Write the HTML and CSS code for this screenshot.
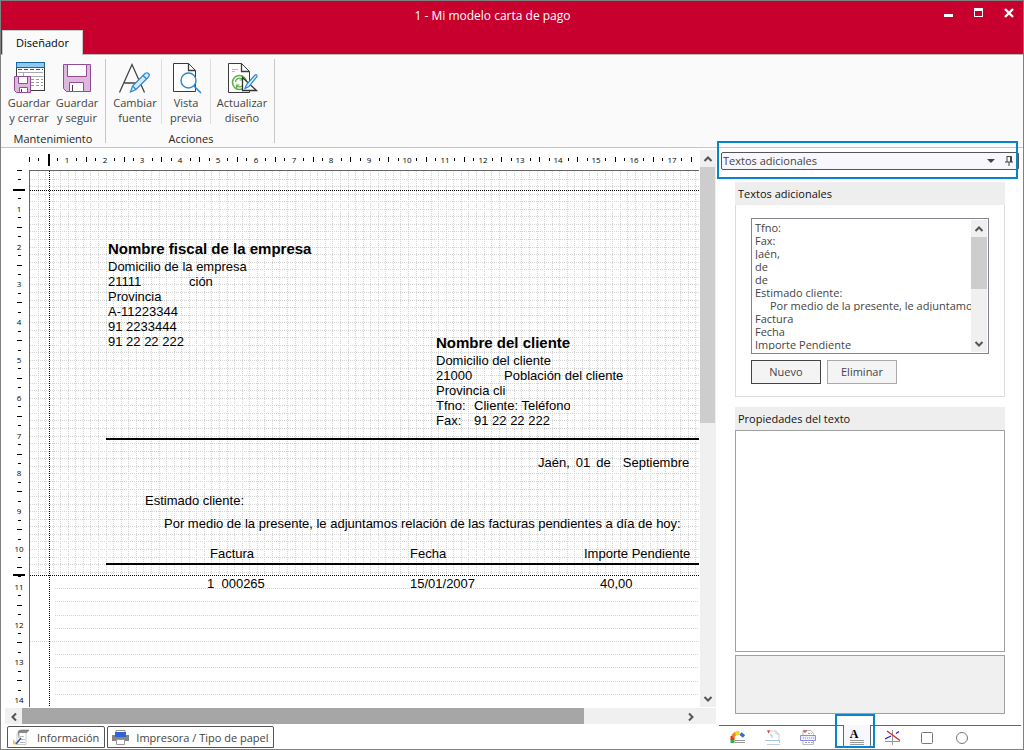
FILE: index.html
```html
<!DOCTYPE html>
<html lang="es">
<head>
<meta charset="utf-8">
<title>1 - Mi modelo carta de pago</title>
<link rel="stylesheet" href="styles.css">
</head>
<body>
<div class="window">
  <header class="titlebar">
    <h1 class="title">1 - Mi modelo carta de pago</h1>
    <div class="controls">
      <button class="control" aria-label="Minimizar"><svg width="10" height="10" viewBox="0 0 10 10"><path d="M0 6h9v3H0z" fill="#fff"/></svg></button>
      <button class="control" aria-label="Maximizar"><svg width="10" height="10" viewBox="0 0 10 10"><path d="M0 0h9v9H0zM1 3v5h7V3z" fill="#fff" fill-rule="evenodd"/></svg></button>
      <button class="control" aria-label="Cerrar"><svg width="10" height="10" viewBox="0 0 10 10"><path d="M1 1l8 8M9 1l-8 8" stroke="#fff" stroke-width="2.4"/></svg></button>
    </div>
    <button class="ribbon-tab">Diseñador</button>
  </header>

  <div class="ribbon">
    <section class="group">
      <div class="group-buttons">
        <button class="tool">
          <svg width="34" height="34" viewBox="0 0 34 34"><rect x="4.500" y="1.500" width="28" height="28" fill="#fff" stroke="#3b3b3b"/><rect x="4.500" y="1.500" width="28" height="5" fill="#91c8f0" stroke="#1467ab"/><path d="M6 8.500h25" stroke="#555" stroke-dasharray="4 2"/><path d="M6 11.500h25M11.500 11v4.500h20" stroke="#aaa" fill="none"/><path d="M19 18.500h12M19 21.500h12M19 24.500h12" stroke="#999" stroke-dasharray="3 2"/><path d="M2.500 15.500h16v16h-14l-2-2z" fill="#dcb8dc" stroke="#954a98"/><path d="M6.500 15.500h9v7h-9zM7.500 26.500h8v5h-8z" fill="#fff" stroke="#954a98"/><path d="M9.500 28v3" stroke="#444"/></svg>
          <span>Guardar<br>y cerrar</span>
        </button>
        <button class="tool">
          <svg width="34" height="34" viewBox="0 0 34 34"><path d="M3.500 3.500h27V30.500h-24l-3-3z" fill="#dcb8dc" stroke="#954a98"/><path d="M7.500 3.500h19v12h-19zM9.500 21.500h14v9h-14z" fill="#fff" stroke="#954a98"/><path d="M12.500 24v6" stroke="#444"/></svg>
          <span>Guardar<br>y seguir</span>
        </button>
      </div>
      <h2 class="group-name">Mantenimiento</h2>
    </section>
    <section class="group">
      <div class="group-buttons">
        <button class="tool tool-font">
          <svg width="34" height="34" viewBox="0 0 34 34"><path d="M1.500 31.500L14 3.500l12.500 28M6.500 22h14" fill="none" stroke="#444" stroke-width="1.300"/><path d="M12.500 31l2-6L27 12.500q2-1.500 3.500 0t0 3.500L18 28.500zM14.500 25l3.500 3.500M25 14.500l3.500 3.500" fill="#d5eaf8" stroke="#2b88cc" stroke-width="1.200"/></svg>
          <span>Cambiar<br>fuente</span>
        </button>
        <button class="tool tool-preview">
          <svg width="34" height="34" viewBox="0 0 34 34"><path d="M4.500 2.500h15l7 7v21h-22z" fill="#fff" stroke="#3b3b3b"/><path d="M19.500 2.500v7h7" fill="none" stroke="#3b3b3b" stroke-width="1.300"/><circle cx="19.500" cy="19.500" r="7.500" fill="#fff" stroke="#2b88cc" stroke-width="1.400"/><path d="M25 25l7 7" stroke="#2b88cc" stroke-width="1.500"/></svg>
          <span>Vista<br>previa</span>
        </button>
        <button class="tool tool-refresh">
          <svg width="34" height="34" viewBox="0 0 34 34"><path d="M3.500 2.500h13l8 8v21h-21z" fill="#fff" stroke="#3b3b3b"/><path d="M16.500 2.500v8h8" fill="none" stroke="#3b3b3b" stroke-width="1.300"/><path d="M7 8.500h6M7 10.500h3" stroke="#bbb"/><circle cx="14.500" cy="21.500" r="7" fill="#fff" stroke="#5cb045" stroke-width="1.600"/><path d="M10.500 21a4 4 0 0 1 7-2.500M18.500 22a4 4 0 0 1-7 2.500M17.500 16v3h-3M11.500 27v-3h3" fill="none" stroke="#5cb045" stroke-width="1.200"/><path d="M17.500 16.500v13h14z" fill="#fff" stroke="#333" stroke-width="1.300"/><path d="M20 27.500l1.500-4L30 14q2-1 2 1.500L24 25.500z" fill="#d5eaf8" stroke="#2b88cc" stroke-width="1.200"/></svg>
          <span>Actualizar<br>diseño</span>
        </button>
      </div>
      <h2 class="group-name">Acciones</h2>
    </section>
  </div>

  <main class="workspace">
    <div class="designer">
      <div class="editor">
        <svg class="ruler ruler-top" aria-hidden="true"></svg>
        <svg class="ruler ruler-left" aria-hidden="true"></svg>
        <div class="page">
          <svg class="page-grid" aria-hidden="true"></svg>
          <div class="block company">
            <strong class="name">Nombre fiscal de la empresa</strong>
            <span>Domicilio de la empresa</span>
            <span class="pair"><span>21111</span><span>ción</span></span>
            <span>Provincia</span>
            <span>A-11223344</span>
            <span>91 2233444</span>
            <span>91 22 22 222</span>
          </div>
          <div class="block client">
            <strong class="name">Nombre del cliente</strong>
            <span>Domicilio del cliente</span>
            <span class="pair pair-city"><span>21000</span><span>Población del cliente</span></span>
            <span>Provincia cli</span>
            <span class="pair pair-phone"><span>Tfno:</span><span class="clipped">Cliente: Teléfono</span></span>
            <span class="pair pair-phone"><span>Fax:</span><span>91 22 22 222</span></span>
          </div>
          <div class="block rule"></div>
          <div class="block date"><span>Jaén,</span><span>01</span><span>de</span><span class="month">Septiembre</span></div>
          <div class="block greeting">Estimado cliente:</div>
          <div class="block intro">Por medio de la presente, le adjuntamos relación de las facturas pendientes a día de hoy:</div>
          <div class="block columns"><span>Factura</span><span>Fecha</span><span>Importe Pendiente</span></div>
          <div class="block detail"><span>1&nbsp; 000265</span><span>15/01/2007</span><span>40,00</span></div>
        </div>
        <div class="scroll scroll-v">
          <button class="arrow" aria-label="Subir"><svg width="10" height="10" viewBox="0 0 10 10"><path d="M1.500 7L5 3.500 8.500 7"/></svg></button>
          <div class="thumb"></div>
          <button class="arrow arrow-end" aria-label="Bajar"><svg width="10" height="10" viewBox="0 0 10 10"><path d="M1.500 3L5 6.500 8.500 3"/></svg></button>
        </div>
        <div class="scroll scroll-h">
          <button class="arrow" aria-label="Izquierda"><svg width="10" height="10" viewBox="0 0 10 10"><path d="M7 1.500L3.500 5 7 8.500"/></svg></button>
          <div class="thumb"></div>
          <button class="arrow arrow-end" aria-label="Derecha"><svg width="10" height="10" viewBox="0 0 10 10"><path d="M3 1.500L6.500 5 3 8.500"/></svg></button>
        </div>
      </div>
      <div class="sheet-tabs">
        <button class="sheet-tab"><svg width="17" height="17" viewBox="0 0 17 17"><path d="M5 3.500h8v12H4v-11z" fill="#fff" stroke="#ccc"/><path d="M5 4Q5 1 8 1h8l-2 2.500H6V9" fill="#888" stroke="#777" stroke-width=".6"/><path d="M7 7.500h4M7 10.500h5M7 13.500h5" stroke="#bbb"/><path d="M0 10l5 5.500H0z" fill="#f3c86a"/><path d="M3 15l5-6" stroke="#2b5b95" stroke-width="1.500"/></svg>Información</button>
        <button class="sheet-tab sheet-printer"><svg width="17" height="17" viewBox="0 0 17 17"><path d="M4 1.500h9v4H4z" fill="#fff" stroke="#999"/><path d="M0 6h17v6H0z" fill="#858585"/><path d="M3 3h11v5H3z" fill="#3163d4"/><path d="M4.500 10.500h8v5h-8z" fill="#fff" stroke="#999"/></svg>Impresora / Tipo de papel</button>
      </div>
    </div>

    <aside class="panel">
      <div class="panel-head">
        <select class="panel-select" aria-label="Panel"><option>Textos adicionales</option></select>
        <svg class="caret" width="8" height="4" viewBox="0 0 8 4"><path d="M0 0h8L4 4z" fill="#444"/></svg>
        <button class="pin" aria-label="Fijar"><svg width="8" height="10" viewBox="0 0 8 10"><path d="M2 .5h4.500V6M2 0v6M5.500 0v6M0 6h8M4 6v4" fill="none" stroke="#444"/></svg></button>
        <div class="highlight highlight-head"></div>
      </div>
      <div class="panel-body">
        <section class="box">
          <h2 class="box-title"><label for="texts">Textos adicionales</label></h2>
          <div class="box-content">
            <div class="list">
              <select id="texts" class="list-items" size="10">
                <option>Tfno:</option><option>Fax:</option><option>Jaén,</option><option>de</option><option>de</option><option>Estimado cliente:</option><option class="indent">Por medio de la presente, le adjuntamos relación</option><option>Factura</option><option>Fecha</option><option>Importe Pendiente</option>
              </select>
              <div class="scroll list-scroll">
                <button class="arrow" aria-label="Subir"><svg width="10" height="10" viewBox="0 0 10 10"><path d="M1.500 7L5 3.500 8.500 7"/></svg></button>
                <div class="thumb"></div>
                <button class="arrow arrow-end" aria-label="Bajar"><svg width="10" height="10" viewBox="0 0 10 10"><path d="M1.500 3L5 6.500 8.500 3"/></svg></button>
              </div>
            </div>
            <div class="actions"><button class="action action-main">Nuevo</button><button class="action">Eliminar</button></div>
          </div>
        </section>
        <section class="properties">
          <h2 class="box-title">Propiedades del texto</h2>
          <div class="prop-grid"></div>
          <div class="prop-help"></div>
        </section>
      </div>
      <nav class="panel-tabs">
        <button class="ptab" aria-label="Campos"><svg width="16" height="15" viewBox="0 0 16 15"><path d="M2.500 13V9.500" stroke="#3bab3b" stroke-width="4"/><path d="M2.500 10V6" stroke="#e03b24" stroke-width="4"/><path d="M2.500 6.500L6 3" stroke="#e88a26" stroke-width="3.500"/><circle cx="7.500" cy="3" r="2.300" fill="#f3d52b"/><path d="M10.500 3.500l3.500 3" stroke="#2d74c4" stroke-width="3.500"/><path d="M5 10.500h10M5 12.500h10" stroke="#999"/></svg></button>
        <button class="ptab" aria-label="Encabezado"><svg width="16" height="15" viewBox="0 0 16 15"><path d="M3 1h8l3 3v6M11 1v3h3M2 14.500h13" fill="none" stroke="#ccc"/><path d="M2 1h3M3.500 1v2" stroke="#d33"/><path d="M5 5h2v3" stroke="#bbb" fill="none"/><path d="M0 10.500h14.500v2.500" stroke="#9bc9ee" fill="none"/></svg></button>
        <button class="ptab" aria-label="Detalle"><svg width="16" height="15" viewBox="0 0 16 15"><path d="M3 .5h8l2.500 3V14.500H3z" fill="#fff" stroke="#bbb"/><path d="M.5 5.500h15v5H.5z" fill="#eef" stroke="#8b8be8"/><path d="M3 8h11" stroke="#8b8be8" stroke-dasharray="1 1"/><path d="M3 1h4M5 1v2" stroke="#d33"/><path d="M5 12.500h8M8 3.500h4" stroke="#aaa" stroke-dasharray="2 1"/></svg></button>
        <button class="ptab ptab-active" aria-label="Textos"><span class="letter">A</span><svg width="14" height="6" viewBox="0 0 14 6"><path d="M0 .5h14M0 2.500h14M0 4.500h14" stroke="#999"/></svg><span class="highlight highlight-tab"></span></button>
        <button class="ptab" aria-label="Líneas"><svg width="16" height="15" viewBox="0 0 16 15"><path d="M0 11.500h15M7.500 0v15" stroke="#999"/><path d="M2 1l13 9.500" stroke="#e02020" stroke-width="1.300"/><path d="M0 9L6 6M11 3.500L14 1.500" stroke="#2020d0" stroke-width="1.300"/></svg></button>
        <button class="ptab" aria-label="Rectángulo"><svg width="15" height="15" viewBox="0 0 15 15"><rect x="1.500" y="2.500" width="11" height="11" rx="1" fill="#fff" stroke="#777"/></svg></button>
        <button class="ptab" aria-label="Elipse"><svg width="15" height="15" viewBox="0 0 15 15"><circle cx="7" cy="8" r="5.500" fill="#fff" stroke="#777"/></svg></button>
      </nav>
    </aside>
  </main>
</div>
<script src="designer.js"></script>
</body>
</html>
```
FILE: styles.css
```css
* { box-sizing: border-box; }
body { margin: 0; font-family: "Open Sans", sans-serif; font-size: 11px; color: #444; }
button, select { font: inherit; color: inherit; margin: 0; padding: 0; border: 0; background: none; border-radius: 0; outline: 0; }
h1, h2 { margin: 0; font-size: 11px; font-weight: 400; }
svg { display: block; flex: none; }

.window { display: flex; flex-direction: column; height: 100vh; border: 1px solid #808080; background: #fff; }

.titlebar { display: grid; grid-template: 29px 24px / 1fr auto; background: #c8002d; border-bottom: 1px solid #c0b8b8; }
.title { font-size: 12px; line-height: 29px; text-align: center; color: #fff; padding-left: 40px; }
.controls { display: flex; gap: 20px; padding: 7px 9px 0 0; align-items: flex-start; }
.control { width: 10px; height: 10px; }
.ribbon-tab { justify-self: start; grid-column: 1; width: 81px; height: 25px; margin-left: 1px; padding-bottom: 1px; background: #fafafa; border: 1px solid #c8c8c8; border-bottom: 0; color: #000; }

.ribbon { display: flex; height: 93px; background: #fafafa; border-bottom: 1px solid #c6c6c6; padding: 4px 0; }
.group { display: flex; flex-direction: column; border-right: 1px solid #c6c6c6; padding-left: 4px; }
.group + .group { padding-left: 2px; }
.group-buttons { display: flex; flex: 1; }
.group-name { text-align: center; color: #262626; line-height: 9px; }
.group:first-child .group-name { padding-right: 4px; }
.tool { display: flex; flex-direction: column; align-items: center; width: 48px; padding-top: 2px; line-height: 15px; }
.group:first-child .group-buttons { padding-right: 4px; }
.tool-font { width: 54px; }
.tool-preview { width: 48px; box-shadow: -1px 0 #dedede, 1px 0 #dedede; height: 65px; }
.tool-refresh { width: 64px; }

.workspace { flex: 1; display: flex; min-height: 0; }
.designer { flex: 1; min-width: 0; display: flex; flex-direction: column; }
.editor { flex: 1; min-height: 0; display: grid; grid-template: 22px 1fr 18px / 28px 1fr 17px; }
.ruler { grid-row: 1; grid-column: 1 / 3; width: 100%; height: 100%; font-size: 8px; fill: #000; }
.ruler-left { grid-row: 1 / 3; grid-column: 1; }
.page { grid-row: 2; grid-column: 2; position: relative; overflow: hidden; border: solid #666; border-width: 1px 0 0 1px; font: 13px/15px "Liberation Sans", sans-serif; color: #000; }
.page-grid { width: 100%; height: 100%; }

.block { position: absolute; white-space: nowrap; }
.company, .client { display: flex; flex-direction: column; }
.name { font-size: 15px; line-height: 20px; }
.company { left: 78px; top: 68px; }
.client { left: 406px; top: 162px; }
.pair { display: grid; grid-template-columns: 81px auto; }
.pair-city { grid-template-columns: 68px auto; }
.pair-phone { grid-template-columns: 38px auto; }
.clipped { width: 96px; overflow: hidden; }
.rule { left: 76px; right: 0; top: 267px; height: 2px; background: #000; }
.date { left: 508px; top: 284px; display: flex; gap: 6px; }
.month { padding-left: 6px; }
.greeting { left: 115px; top: 322px; }
.intro { left: 134px; top: 345px; }
.columns, .detail { left: 76px; right: 0; display: grid; grid-template-columns: 200px 174px 1fr; }
.columns { top: 375px; height: 19px; border-bottom: 2px solid #000; padding-left: 104px; }
.detail { top: 405px; padding-left: 101px; grid-template-columns: 203px 190px 1fr; }

.scroll { display: flex; background: #f0f0f0; }
.scroll .thumb { background: #cdcdcd; }
.arrow { display: grid; place-items: center; flex: none; width: 15px; height: 17px; }
.arrow path { fill: none; stroke: #555; stroke-width: 2; }
.scroll-v { grid-row: 1 / 3; grid-column: 3; flex-direction: column; margin: 2px 0 0 1px; }
.scroll-v .arrow, .list-scroll .arrow { margin-left: 0; }
.scroll-v .thumb { height: 46%; margin-right: 1px; }
.scroll-h { grid-row: 3; grid-column: 1 / 4; margin: 1px 0 1px 4px; }
.scroll-h .thumb { width: 79%; background: #a6a6a6; }
.scroll-h .arrow { width: 17px; }
.scroll-h .arrow-end { margin-right: 17px; }
.arrow-end { margin-top: auto; margin-left: auto; }

.sheet-tabs { display: flex; gap: 2px; height: 24px; padding: 1px 0 1px 6px; }
.sheet-tab { display: flex; align-items: center; gap: 7px; height: 22px; padding: 0 5px; border: 1px solid #555; border-radius: 2px 2px 0 0; }
.sheet-printer { padding: 0 4px; }

.panel { width: 307px; flex: none; display: flex; flex-direction: column; padding-left: 3px; }
.panel-head { position: relative; height: 18px; margin: 4px 4px 0 2px; border: 1px solid #555; border-radius: 2px; background: #f7f7fd; display: flex; align-items: center; }
.panel-select { appearance: none; flex: 1; height: 16px; padding: 0 0 1px 1px; }
.caret { margin-right: 9px; }
.pin { width: 12px; height: 10px; padding-left: 1px; margin-right: 2px; }
.highlight { position: absolute; border: 2px solid #0a84c8; pointer-events: none; }
.highlight-head { inset: -12px 0 -10px -5px; }
.panel-body { flex: 1; display: flex; flex-direction: column; gap: 10px; padding: 12px 18px 11px 16px; }
.box-title { height: 23px; line-height: 23px; padding-left: 3px; background: #eee; color: #111; }
.box { border: 1px solid #dcdcdc; border-top: 0; }
.box > .box-title { margin: 0 -1px; }
.box-content { padding: 13px 15px 12px; }
.list { display: flex; height: 136px; border: 1px solid #82858f; padding: 1px 1px 1px 0; }
.list-items { flex: 1; min-width: 0; height: 132px; overflow: hidden; padding: 0 0 0 3px; }
.list-items option { height: 13px; min-height: 13px; line-height: 11px; padding: 0; overflow: hidden; }
.list-items .indent { padding-left: 15px; }
.list-scroll { flex-direction: column; width: 16px; }
.list-scroll .thumb { height: 52px; }
.actions { display: flex; gap: 6px; margin-top: 6px; }
.action { width: 70px; height: 24px; padding-bottom: 1px; border: 1px solid #aaa; background: #f4f4f4; }
.action-main { border-color: #444; }
.properties { flex: 1; display: flex; flex-direction: column; }
.prop-grid { flex: 1; border: 1px solid #a0a0a0; }
.prop-help { height: 59px; margin-top: 3px; border: 1px solid #a0a0a0; background: #f0f0f0; }

.panel-tabs { display: flex; height: 24px; border-top: 1px solid #666; margin: 0 2px 0 0; padding-left: 1px; }
.ptab { width: 35px; display: flex; flex-direction: column; align-items: center; padding-top: 4px; }
.ptab-active { position: relative; width: 28px; height: 22px; margin: -1px 4px 0 18px; padding-top: 4px; background: #f7f7fd; border: 1px solid #666; border-top: 0; border-radius: 0 0 2px 2px; }
.letter { font: bold 12px/11px "Liberation Serif", serif; color: #000; padding-right: 6px; height: 12px; }
.highlight-tab { inset: -11px -5px -2px -9px; }
```
FILE: designer.js
```js
// Rulers and grid of the page designer, in pixels per centimetre.
const CM = 37.8;
const SECTION_END = 404;
const GRID = "#d4d4d4";

function rect(x, y, w, h) {
  return `<rect x="${x}" y="${y}" width="${w}" height="${h}"/>`;
}

function line(x1, y1, x2, y2, color) {
  return `<line x1="${x1}" y1="${y1}" x2="${x2}" y2="${y2}" stroke="${color}" stroke-dasharray="1 1"/>`;
}

// Calls mark(position, kind, number) for every quarter that fits in length.
function eachQuarter(start, length, mark) {
  for (let k = 0; ; k++) {
    const p = Math.round(start + k * CM / 4);
    if (p > length - 6) return;
    if (k === 2) mark(p, "origin");
    else if (k && k % 4 === 0) mark(p, "number", k / 4);
    else mark(p, k % 2 ? "short" : "long");
  }
}

function draw() {
  const topRuler = document.querySelector(".ruler-top");
  const leftRuler = document.querySelector(".ruler-left");
  const page = document.querySelector(".page-grid");
  const width = page.clientWidth;
  const height = page.clientHeight;

  let out = "";
  eachQuarter(28, topRuler.clientWidth, (x, kind, n) => {
    if (kind === "origin") out += rect(x, 6, 2, 12);
    else if (kind === "number") out += `<text x="${x}" y="15" text-anchor="middle">${n}</text>`;
    else out += kind === "long" ? rect(x, 9, 1, 5) : rect(x, 10, 1, 3);
  });
  topRuler.innerHTML = out;

  out = rect(12, 22 + SECTION_END, 12, 2);
  eachQuarter(22, leftRuler.clientHeight, (y, kind, n) => {
    if (kind === "origin") out += rect(12, y, 12, 2);
    else if (kind === "number") out += `<text x="18" y="${y + 4}" text-anchor="middle">${n}</text>`;
    else out += kind === "long" ? rect(16, y, 5, 1) : rect(17, y, 3, 1);
  });
  leftRuler.innerHTML = out;

  out = "";
  for (let i = 1; i * CM / 5 < Math.max(width, SECTION_END); i++) {
    const p = Math.round(i * CM / 5) + 0.5;
    out += line(p, 0, p, SECTION_END, GRID);
    if (p < SECTION_END) out += line(0, p, width, p, GRID);
  }
  for (let i = 1; SECTION_END + i * 13.2 < height + 1; i++) {
    const y = Math.round(SECTION_END + i * 13.2) + 0.5;
    out += line(i % 5 ? 25 : 0, y, width, y, GRID);
  }
  out += line(19.5, 0, 19.5, height, "#000");
  out += line(0, 19.5, width, 19.5, "#000");
  out += line(0, SECTION_END + 0.5, width, SECTION_END + 0.5, "#000");
  page.innerHTML = out;
}

draw();
window.addEventListener("resize", draw);
```
